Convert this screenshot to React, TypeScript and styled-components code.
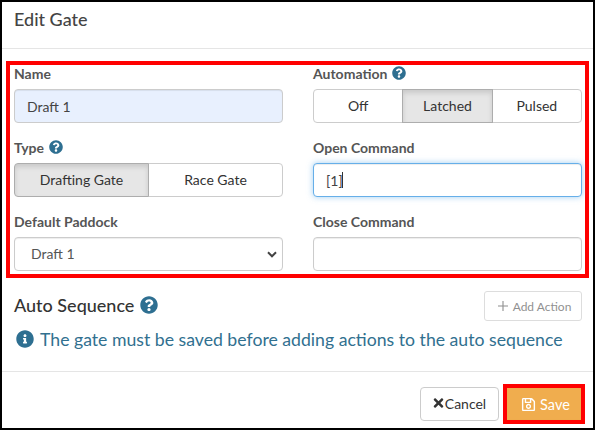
import React from "react";
import styled, { createGlobalStyle } from "styled-components";
import { FaQuestionCircle, FaInfoCircle, FaTimes, FaRegSave } from "react-icons/fa";

const Global = createGlobalStyle`
  html, body { margin: 0; padding: 0; background: #fff; }
  * { box-sizing: border-box; }
  body { font-family: Lato, "Open Sans", sans-serif; color: #333; }
`;

const Frame = styled.div`
  width: 595px;
  height: 430px;
  border: 2px solid #000;
  background: #fff;
  display: flex;
  flex-direction: column;
  overflow: hidden;
`;

const Header = styled.header`
  height: 47px;
  flex: none;
  padding: 5px 12px 0;
  border-bottom: 1px solid #e5e5e5;
`;

const Title = styled.h4`
  margin: 0;
  font-size: 18px;
  line-height: 24px;
  font-weight: 500;
  color: #444;
`;

const Annotated = styled.form`
  margin: 12px 4px 0;
  height: 217px;
  border: 4px solid #f00;
  padding: 0 3px 0 4px;
  display: grid;
  grid-template-columns: 269px 269px;
  column-gap: 30px;
  grid-auto-rows: 74px;
`;

const Field = styled.div`
  display: flex;
  flex-direction: column;
`;

const Label = styled.label`
  display: flex;
  align-items: center;
  gap: 5px;
  height: 24px;
  padding-bottom: 8px;
  font-size: 14px;
  font-weight: 700;
  color: #555;
`;

const Help = styled(FaQuestionCircle)<{ $size?: number }>`
  color: #2e6f91;
  width: ${(p) => p.$size ?? 14}px;
  height: ${(p) => p.$size ?? 14}px;
  flex: none;
`;

const TextInput = styled.input<{ $filled?: boolean; $focused?: boolean }>`
  width: 269px;
  height: 34px;
  border-radius: 4px;
  border: 1px solid ${(p) => (p.$focused ? "#66afe9" : "#ccc")};
  background: ${(p) => (p.$filled ? "#e8f0fe" : "#fff")};
  box-shadow: ${(p) =>
    p.$focused
      ? "inset 0 1px 1px rgba(0,0,0,.075), 0 0 6px rgba(102,175,233,.6)"
      : "inset 0 1px 1px rgba(0,0,0,.075)"};
  padding: 0 12px;
  font: 14px Lato, sans-serif;
  color: #444;
  outline: none;
`;

const InputWrap = styled.div`
  position: relative;
  height: 34px;
`;

const Caret = styled.span`
  position: absolute;
  left: 29px;
  top: 9px;
  width: 1px;
  height: 16px;
  background: #333;
`;

const chevron =
  "data:image/svg+xml;utf8," +
  encodeURIComponent(
    '<svg xmlns="http://www.w3.org/2000/svg" width="10" height="7" viewBox="0 0 10 7"><path d="M1 1.3l4 4 4-4" fill="none" stroke="#444" stroke-width="2"/></svg>'
  );

const Select = styled.select`
  appearance: none;
  width: 269px;
  height: 34px;
  border-radius: 4px;
  border: 1px solid #ccc;
  background: #fff url("${chevron}") no-repeat right 5px center;
  box-shadow: inset 0 1px 1px rgba(0,0,0,.075);
  padding: 0 12px 2px 16px;
  font: 14px Lato, sans-serif;
  color: #555;
  outline: none;
`;

const Segments = styled.div`
  display: flex;
  height: 34px;
`;

const Segment = styled.button<{ $active?: boolean; $pos: "first" | "mid" | "last" }>`
  flex: 1 1 0;
  min-width: 0;
  padding: 0 0 2px;
  margin-left: ${(p) => (p.$pos === "first" ? 0 : "-1px")};
  font: 14px Lato, sans-serif;
  color: #333;
  background: ${(p) => (p.$active ? "#e6e6e6" : "#fff")};
  border: 1px solid ${(p) => (p.$active ? "#adadad" : "#ccc")};
  box-shadow: ${(p) => (p.$active ? "inset 0 3px 5px rgba(0,0,0,.125)" : "none")};
  position: relative;
  z-index: ${(p) => (p.$active ? 1 : 0)};
  border-radius: ${(p) =>
    p.$pos === "first" ? "4px 0 0 4px" : p.$pos === "last" ? "0 4px 4px 0" : "0"};
`;

const Body = styled.section`
  height: 94px;
  flex: none;
  padding: 13px 11px 0 12px;
  border-bottom: 1px solid #e5e5e5;
`;

const SequenceHead = styled.div`
  display: flex;
  align-items: center;
  justify-content: space-between;
  height: 30px;
`;

const SequenceTitle = styled.h4`
  margin: 0;
  padding-bottom: 2px;
  display: flex;
  align-items: center;
  gap: 6px;
  font-size: 18px;
  font-weight: 500;
  color: #333;
`;

const AddButton = styled.button`
  width: 98px;
  height: 30px;
  padding: 0 0 0 3px;
  display: flex;
  align-items: center;
  justify-content: center;
  gap: 5px;
  border: 1px solid #ccc;
  border-radius: 3px;
  background: #fff;
  opacity: 0.65;
  font: 12px Lato, sans-serif;
  color: #555;
`;

const Notice = styled.p`
  margin: 3px 0 0 2px;
  display: flex;
  align-items: center;
  gap: 6px;
  height: 30px;
  font-size: 17.67px;
  color: #31708f;
  white-space: nowrap;
`;

const InfoIcon = styled(FaInfoCircle)`
  width: 18px;
  height: 18px;
  color: #2e6f91;
  flex: none;
`;

const Footer = styled.footer`
  flex: 1;
  display: flex;
  justify-content: flex-end;
  align-items: flex-start;
  padding: 12px 8px 0 0;
  gap: 4px;
`;

const CancelButton = styled.button`
  margin-top: 3px;
  width: 79px;
  height: 34px;
  padding: 0 0 2px;
  display: flex;
  align-items: center;
  justify-content: center;
  gap: 1px;
  border: 1px solid #ccc;
  border-radius: 4px;
  background: #fff;
  font: 14px Lato, sans-serif;
  color: #333;
`;

const CancelIcon = styled(FaTimes)`
  width: 11px;
  height: 14px;
  flex: none;
`;

const SaveHighlight = styled.div`
  width: 82px;
  height: 40px;
  border: 4px solid #f00;
`;

const SaveButton = styled.button`
  width: 100%;
  height: 100%;
  padding: 0 0 0 3px;
  display: flex;
  align-items: center;
  justify-content: center;
  gap: 4px;
  border: 1px solid #efac4d;
  background: #f0ad4e;
  font: 14.5px Lato, sans-serif;
  color: #fff;
`;

const SaveIcon = styled(FaRegSave)`
  width: 15px;
  height: 15px;
  flex: none;
`;

const PlusGlyph = () => (
  <svg width="10" height="10" viewBox="0 0 10 10" fill="none" stroke="currentColor" strokeWidth="1.1">
    <path d="M5 0v10M0 5h10" />
  </svg>
);

export default function App() {
  return (
    <>
      <Global />
      <Frame>
        <Header>
          <Title>Edit Gate</Title>
        </Header>
        <Annotated onSubmit={(e) => e.preventDefault()}>
          <Field>
            <Label>Name</Label>
            <TextInput $filled defaultValue="Draft 1" />
          </Field>
          <Field>
            <Label>
              Automation <Help />
            </Label>
            <Segments>
              <Segment type="button" $pos="first">Off</Segment>
              <Segment type="button" $pos="mid" $active>Latched</Segment>
              <Segment type="button" $pos="last">Pulsed</Segment>
            </Segments>
          </Field>
          <Field>
            <Label>
              Type <Help />
            </Label>
            <Segments>
              <Segment type="button" $pos="first" $active>Drafting Gate</Segment>
              <Segment type="button" $pos="last">Race Gate</Segment>
            </Segments>
          </Field>
          <Field>
            <Label>Open Command</Label>
            <InputWrap>
              <TextInput $focused defaultValue="[1]" />
              <Caret />
            </InputWrap>
          </Field>
          <Field>
            <Label>Default Paddock</Label>
            <Select defaultValue="Draft 1">
              <option>Draft 1</option>
            </Select>
          </Field>
          <Field>
            <Label>Close Command</Label>
            <TextInput defaultValue="" />
          </Field>
        </Annotated>
        <Body>
          <SequenceHead>
            <SequenceTitle>
              Auto Sequence <Help $size={18} />
            </SequenceTitle>
            <AddButton type="button">
              <PlusGlyph /> Add Action
            </AddButton>
          </SequenceHead>
          <Notice>
            <InfoIcon /> The gate must be saved before adding actions to the auto sequence
          </Notice>
        </Body>
        <Footer>
          <CancelButton type="button">
            <CancelIcon /> Cancel
          </CancelButton>
          <SaveHighlight>
            <SaveButton type="button">
              <SaveIcon /> Save
            </SaveButton>
          </SaveHighlight>
        </Footer>
      </Frame>
    </>
  );
}
